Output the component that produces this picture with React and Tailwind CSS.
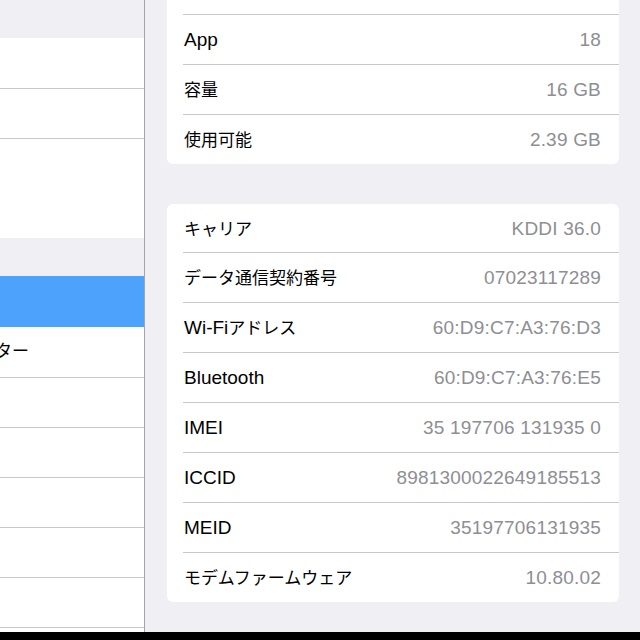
import React from "react";

const font = { fontFamily: '"Liberation Sans", "Noto Sans CJK JP", sans-serif' };

const Jp = ({ children }) => <span className="text-[17px]">{children}</span>;

const Row = ({ label, value, first }) => (
  <div
    className={`ml-[16px] pl-[1px] pr-[18px] pt-[2px] flex items-center justify-between ${
      first ? "h-[48px]" : "h-[50px] border-t border-[#c8c7cc]"
    }`}
  >
    <div className="text-[19px] text-black whitespace-nowrap">{label}</div>
    <div className="text-[19px] text-[#8e8e93] whitespace-nowrap tracking-[0.2px]">{value}</div>
  </div>
);

const storage = [
  { label: "App", value: "18" },
  { label: <Jp>容量</Jp>, value: "16 GB" },
  { label: <Jp>使用可能</Jp>, value: "2.39 GB" },
];

const network = [
  { label: <Jp>キャリア</Jp>, value: "KDDI 36.0" },
  { label: <Jp>データ通信契約番号</Jp>, value: "07023117289" },
  { label: <>Wi-Fi<Jp>アドレス</Jp></>, value: "60:D9:C7:A3:76:D3" },
  { label: "Bluetooth", value: "60:D9:C7:A3:76:E5" },
  { label: "IMEI", value: "35 197706 131935 0" },
  { label: "ICCID", value: "8981300022649185513" },
  { label: "MEID", value: "35197706131935" },
  { label: <Jp>モデムファームウェア</Jp>, value: "10.80.02" },
];

const SideRow = ({ children, border = true, h = "h-[50px]" }) => (
  <div className={`${h} bg-white flex items-center ${border ? "border-t border-[#c8c7cc]" : ""}`}>
    {children}
  </div>
);

export default function App() {
  return (
    <div className="w-[640px] h-[640px] flex flex-col overflow-hidden bg-[#efeff4]" style={font}>
      <div className="flex flex-1 min-h-0">
        <div className="w-[145px] shrink-0 border-r border-[#a3a3a8] overflow-hidden">
          <div className="h-[38px]" />
          <SideRow border={false} />
          <SideRow />
          <SideRow h="h-[100px]" />
          <div className="h-[38px]" />
          <div className="h-[51px] bg-[#4da2fc]" />
          <SideRow border={false}>
            <div className="w-[29px] flex justify-end whitespace-nowrap text-[17px] text-black">
              コントロールセンター
            </div>
          </SideRow>
          <SideRow />
          <SideRow />
          <SideRow />
          <SideRow />
          <SideRow />
          <SideRow />
        </div>
        <div className="flex-1 overflow-hidden px-[22px] pr-[21px]">
          <div className="-mt-[36px] bg-white rounded-[6px]">
            <div className="h-[50px]" />
            {storage.map((r, i) => (
              <Row key={i} {...r} />
            ))}
          </div>
          <div className="mt-[40px] bg-white rounded-[6px]">
            {network.map((r, i) => (
              <Row key={i} {...r} first={i === 0} />
            ))}
          </div>
        </div>
      </div>
      <div className="h-[8px] bg-black shrink-0" />
    </div>
  );
}
